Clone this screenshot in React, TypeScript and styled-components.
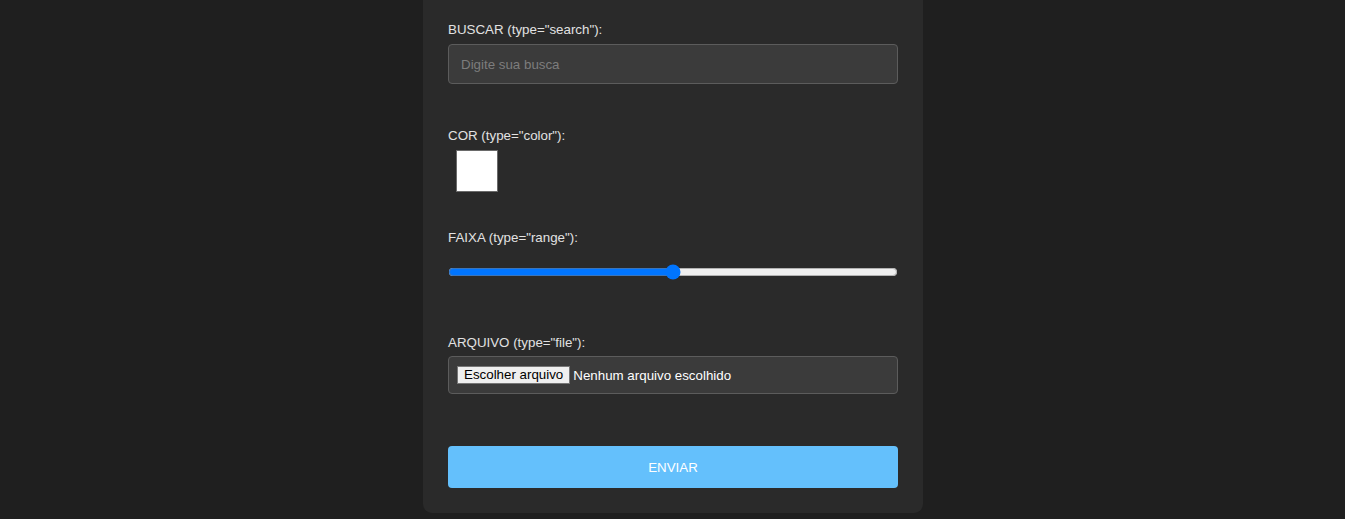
import React from "react";
import styled, { createGlobalStyle } from "styled-components";

const Global = createGlobalStyle`
  html, body { margin: 0; padding: 0; background: #1f1f1f; }
  body { font-family: "Liberation Sans", Arial, sans-serif; }
  * { box-sizing: border-box; }
`;

const Page = styled.div`
  display: flex;
  justify-content: center;
  min-height: 519px;
`;

const Card = styled.form`
  width: 500px;
  margin-left: 1px;
  align-self: flex-start;
  background: #2a2a2a;
  border-radius: 0 0 9px 9px;
  padding: 22px 25px 25px;
  display: flex;
  flex-direction: column;
`;

const Group = styled.div<{ $mb: number; $gap: number }>`
  display: flex;
  flex-direction: column;
  gap: ${(p) => p.$gap}px;
  margin-bottom: ${(p) => p.$mb}px;
`;

const Label = styled.label`
  font-size: 13.333px;
  line-height: 16px;
  color: #e2e2e2;
`;

const TextInput = styled.input`
  height: 40px;
  width: 100%;
  background: #3b3b3b;
  border: 1px solid #5c5c5c;
  border-radius: 4px;
  padding: 0 12px;
  color: #eee;
  font-family: "Liberation Sans", Arial, sans-serif;
  font-size: 13.333px;
  outline: none;
  &::placeholder { color: #7d7d7d; }
`;

const Swatch = styled.span<{ $color: string }>`
  display: block;
  width: 42px;
  height: 42px;
  margin-left: 8px;
  background: ${(p) => p.$color};
  border: 1px solid #6a6a6a;
`;

const Range = styled.input`
  width: 100%;
  height: 16px;
  margin: 0;
  accent-color: #0075ff;
`;

const FileBox = styled.div`
  display: flex;
  align-items: center;
  gap: 3px;
  height: 38px;
  background: #3b3b3b;
  border: 1px solid #5c5c5c;
  border-radius: 4px;
  padding: 0 8px;
`;

const FileButton = styled.button`
  height: 18px;
  padding: 0 6px;
  background: #efefef;
  border: 1px solid #767676;
  border-radius: 0;
  color: #000;
  font-family: "Liberation Sans", Arial, sans-serif;
  font-size: 13.333px;
  line-height: 16px;
`;

const FileText = styled.span`
  color: #fff;
  font-size: 13.333px;
`;

const Submit = styled.button`
  height: 42px;
  width: 100%;
  border: none;
  border-radius: 4px;
  background: #64c0fc;
  color: #fff;
  font-family: "Liberation Sans", Arial, sans-serif;
  font-size: 13.333px;
`;

export default function App() {
  return (
    <>
      <Global />
      <Page>
        <Card onSubmit={(e) => e.preventDefault()}>
          <Group $mb={44} $gap={6}>
            <Label>BUSCAR (type="search"):</Label>
            <TextInput type="text" placeholder="Digite sua busca" />
          </Group>
          <Group $mb={38} $gap={6}>
            <Label>COR (type="color"):</Label>
            <Swatch $color="#ffffff" />
          </Group>
          <Group $mb={55} $gap={18}>
            <Label>FAIXA (type="range"):</Label>
            <Range type="range" min={0} max={100} defaultValue={50} />
          </Group>
          <Group $mb={52} $gap={5}>
            <Label>ARQUIVO (type="file"):</Label>
            <FileBox>
              <FileButton type="button">Escolher arquivo</FileButton>
              <FileText>Nenhum arquivo escolhido</FileText>
            </FileBox>
          </Group>
          <Submit type="submit">ENVIAR</Submit>
        </Card>
      </Page>
    </>
  );
}
